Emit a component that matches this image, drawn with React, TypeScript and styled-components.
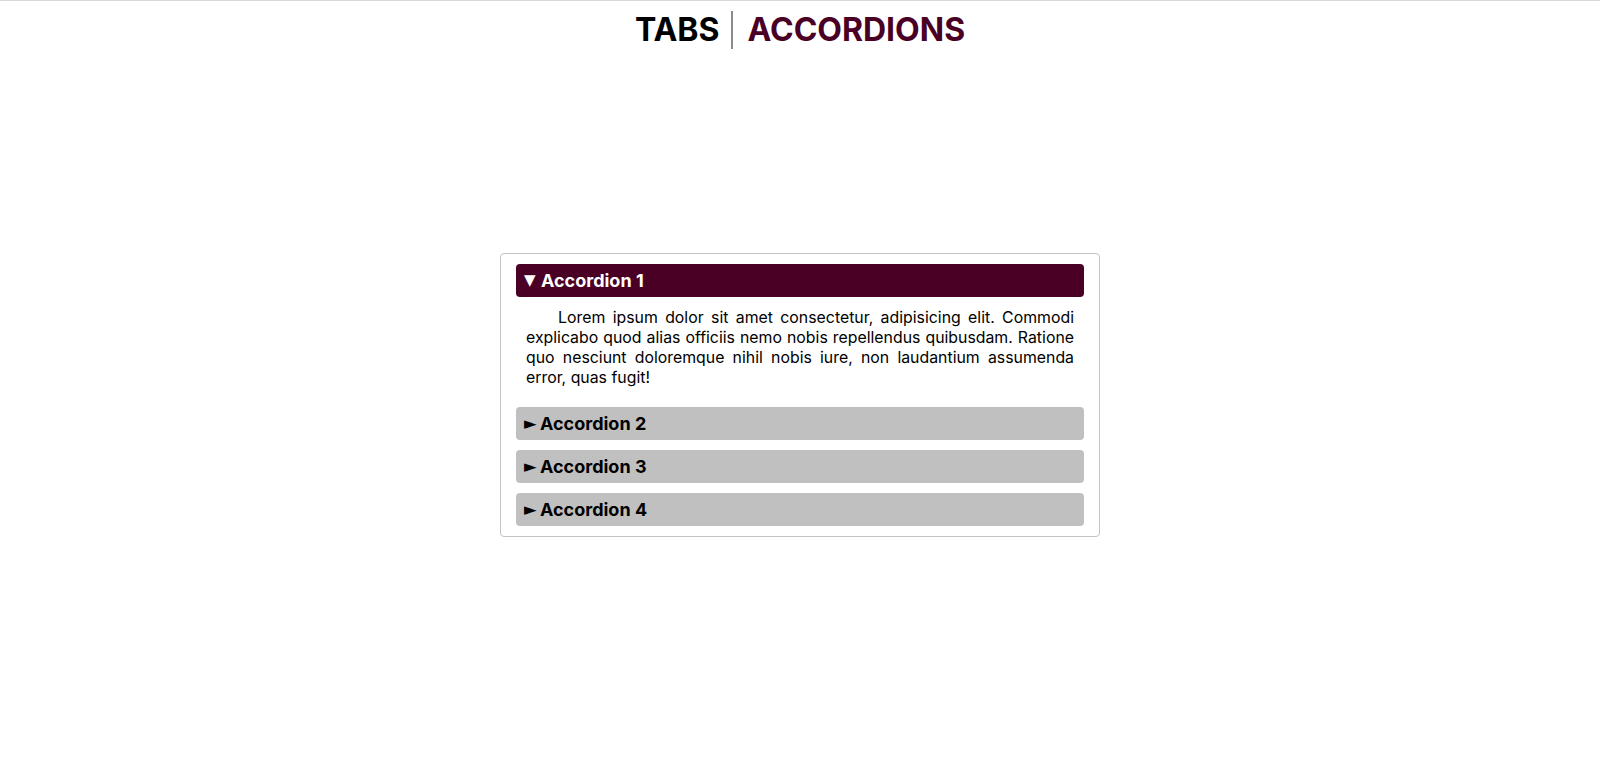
import React, { useState } from "react";
import styled, { createGlobalStyle } from "styled-components";

const GlobalStyle = createGlobalStyle`
  html, body {
    margin: 0;
    padding: 0;
    background: #ffffff;
  }
  body {
    font-family: Inter, "Noto Sans", sans-serif;
    color: #000000;
    border-top: 1px solid #d6d9dc;
  }
  * { box-sizing: border-box; }
`;

const MAROON = "#490024";

const Nav = styled.nav`
  display: flex;
  justify-content: center;
  align-items: stretch;
  margin-top: 10px;
`;

const NavItem = styled.button<{ $active?: boolean; $first?: boolean }>`
  font-family: Inter, sans-serif;
  font-weight: 700;
  font-size: 32px;
  line-height: 38px;
  background: none;
  border: none;
  padding: ${(p) => (p.$first ? "0 12px 0 0" : "0 0 0 14px")};
  margin: 0;
  cursor: pointer;
  color: ${(p) => (p.$active ? MAROON : "#000000")};
  border-right: ${(p) => (p.$first ? "2px solid #8a8a8a" : "none")};
`;

const Card = styled.section`
  width: 600px;
  margin: 204px auto 0;
  border: 1px solid #c4c4c4;
  border-radius: 4px;
  padding: 10px 15px;
  display: flex;
  flex-direction: column;
  gap: 10px;
`;

const Item = styled.div`
  display: flex;
  flex-direction: column;
`;

const Header = styled.button<{ $open: boolean }>`
  display: flex;
  align-items: center;
  width: 100%;
  height: 33px;
  padding: 0 8px;
  border: none;
  border-radius: 4px;
  cursor: pointer;
  font-family: Inter, sans-serif;
  font-weight: 700;
  font-size: 18px;
  text-align: left;
  background: ${(p) => (p.$open ? MAROON : "#c0c0c0")};
  color: ${(p) => (p.$open ? "#ffffff" : "#000000")};
`;

const Marker = styled.span<{ $open: boolean }>`
  display: inline-block;
  width: ${(p) => (p.$open ? "17px" : "16px")};
  font-size: ${(p) => (p.$open ? "15px" : "16.5px")};
  font-family: "DejaVu Sans", sans-serif;
  line-height: 1;
  margin-top: ${(p) => (p.$open ? "0" : "2px")};
`;

const Content = styled.p`
  margin: 0;
  padding: 11px 10px 9px;
  font-size: 15.85px;
  line-height: 20px;
  text-align: justify;
  text-indent: 32px;
`;

const LOREM =
  "Lorem ipsum dolor sit amet consectetur, adipisicing elit. Commodi explicabo quod alias officiis nemo nobis repellendus quibusdam. Ratione quo nesciunt doloremque nihil nobis iure, non laudantium assumenda error, quas fugit!";

export default function App() {
  const [open, setOpen] = useState(0);
  const items = [1, 2, 3, 4];
  return (
    <>
      <GlobalStyle />
      <Nav>
        <NavItem $first>TABS</NavItem>
        <NavItem $active>ACCORDIONS</NavItem>
      </Nav>
      <Card>
        {items.map((n, i) => {
          const isOpen = open === i;
          return (
            <Item key={n}>
              <Header $open={isOpen} onClick={() => setOpen(isOpen ? -1 : i)}>
                <Marker $open={isOpen}>{isOpen ? "▼" : "►"}</Marker>
                Accordion {n}
              </Header>
              {isOpen && <Content>{LOREM}</Content>}
            </Item>
          );
        })}
      </Card>
    </>
  );
}
